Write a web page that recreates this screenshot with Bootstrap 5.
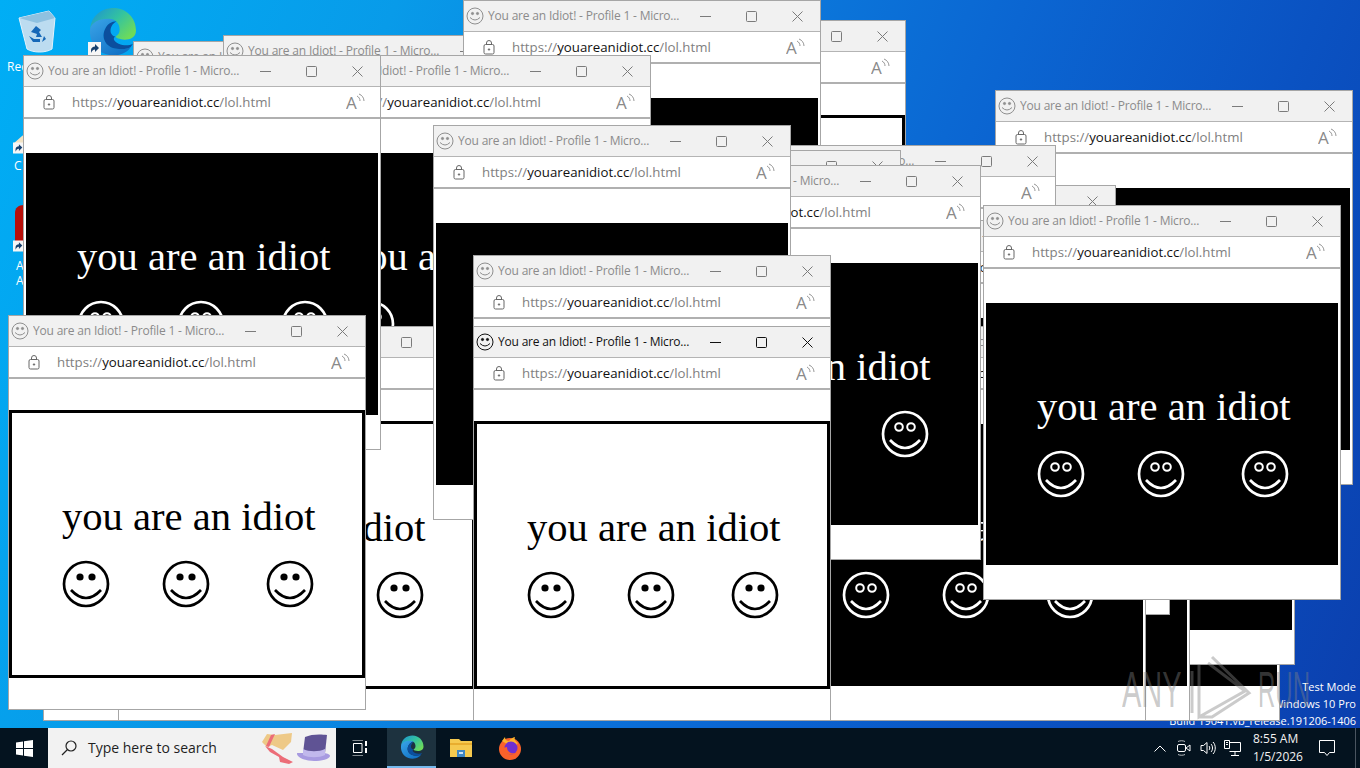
<!DOCTYPE html>
<html lang="en">
<head>
  <meta charset="UTF-8">
  <title>You are an Idiot!</title>
  <link href="https://cdn.jsdelivr.net/npm/bootstrap@5.3.3/dist/css/bootstrap.min.css" rel="stylesheet">
  <script src="https://cdn.jsdelivr.net/npm/bootstrap@5.3.3/dist/js/bootstrap.bundle.min.js"></script>
  <style>
    html, body { height: 768px; overflow: hidden; }
    body {
      font-family: "Open Sans", "Noto Sans", sans-serif;
      width: 1360px;
      margin: 0;
    }
    .desk {
      height: 728px;
      position: relative;
      overflow: hidden;
      background: linear-gradient(112deg, #00aef5 0%, #089be9 24%, #0b7fdf 42%, #0b66d2 62%, #0a52c2 80%, #0b3fae 100%);
    }
    .desk-item { position: absolute; }
    .desk-label { position: absolute; color: #fff; font-size: 12px; line-height: 15px; }
    .test-note {
      position: absolute;
      right: 4px;
      top: 678px;
      text-align: right;
      color: #fff;
      font-size: 11px;
      line-height: 17px;
    }

    .browser-win {
      position: absolute;
      width: 358px;
      height: 395px;
      background: #fff;
      border: 1px solid #a6a6a6;
      display: flex;
      flex-direction: column;
    }
    .win-title {
      height: 31px;
      flex: none;
      background: #f1f1f1;
      border-bottom: 1px solid #b4b4b4;
      display: flex;
      align-items: center;
      color: #8b8b8b;
      font-size: 12px;
      padding-left: 2px;
    }
    .win-title .title-icon { width: 18px; height: 18px; flex: none; margin-right: 4px; color: #8f8f8f; }
    .win-title .title-text { flex: 1; white-space: nowrap; overflow: hidden; letter-spacing: -.19px; }
    .win-btn { width: 46px; height: 30px; flex: none; display: flex; align-items: center; justify-content: center; color: #7b7b7b; }
    .win-addr {
      height: 32px;
      flex: none;
      border-bottom: 2px solid #b0b0b0;
      display: flex;
      align-items: center;
      color: #808080;
      font-size: 13.25px;
      padding-left: 18px;
      white-space: nowrap;
    }
    .win-addr .lock { width: 14px; height: 16px; flex: none; margin-right: 16px; color: #666; }
    .win-addr .url-text { padding-top: 2px; }
    .win-addr b { font-weight: 400; color: #111; }
    .win-addr .read-aloud { width: 20px; height: 18px; flex: none; margin-left: auto; margin-right: 14px; color: #8a8a8a; }
    .active-win .win-title { color: #111; }
    .active-win .win-title .title-icon, .active-win .win-btn { color: #111; }

    .idiot-box {
      margin-top: 31px;
      height: 268px;
      flex: none;
      border: 3px solid #000;
      background: #fff;
      color: #000;
    }
    .idiot-box.dark-box { border-color: #fff; border-width: 3px 2px; background: #000; color: #fff; }
    .idiot-line {
      font-family: "Liberation Serif", serif;
      font-size: 40.6px;
      line-height: 46px;
      white-space: nowrap;
      padding: 81px 0 0 50px;
    }
    .face-row { display: flex; padding: 20px 0 0 50px; }
    .dark-box .idiot-line, .dark-box .face-row { padding-left: 51px; }
    .face-row svg { width: 48px; height: 48px; flex: none; }
    .face-row svg:nth-child(2) { margin: 0 56px 0 52px; }

    .water-mark {
      position: absolute;
      left: 1117px;
      top: 655px;
      width: 200px;
      height: 65px;
      pointer-events: none;
    }
    .water-mark span {
      position: absolute;
      top: 0;
      font-family: "Liberation Sans", sans-serif;
      font-size: 50px;
      line-height: 70px;
      color: rgba(130, 130, 130, .42);
      transform-origin: left top;
    }
    .water-any { left: 5px; transform: scaleX(.58); }
    .water-run { left: 141px; transform: scaleX(.48); }

    .task-bar {
      height: 40px;
      background: #04131f;
      display: flex;
      align-items: stretch;
      color: #fff;
    }
    .task-btn { width: 48px; flex: none; display: flex; align-items: center; justify-content: center; }
    .task-app { width: 49px; }
    .task-btn.on { background: #1d323f; border-bottom: 2px solid #76b9ed; margin-left: 3px; }
    .search-box {
      width: 288px;
      flex: none;
      background: #f2f2f2;
      color: #1f1f1f;
      font-size: 14px;
      display: flex;
      align-items: center;
      padding-left: 13px;
      padding-bottom: 1px;
      position: relative;
    }
    .search-box svg.glass { margin-right: 11px; }
    .search-box svg.hats { position: absolute; left: 213px; top: 1px; }
    .tray { margin-left: auto; display: flex; align-items: center; }
    .tray-icon { display: flex; justify-content: center; width: 24px; }
    .clock { font-size: 12px; line-height: 18px; width: 59px; padding-left: 9px; white-space: nowrap; color: #f2f2f2; }
    .notify { width: 48px; display: flex; justify-content: center; margin-right: 4px; }
    .show-desk { width: 5px; height: 100%; border-left: 1px solid #4a5560; }
  </style>
</head>
<body>

  <svg width="0" height="0" class="position-absolute">
    <defs>
      <linearGradient id="edgeTop" x1="0" y1="0" x2="1" y2=".7">
        <stop offset="0" stop-color="#1b8fd6"/><stop offset=".55" stop-color="#33c3a0"/><stop offset="1" stop-color="#6edb5a"/>
      </linearGradient>
      <linearGradient id="edgeLow" x1="0" y1="0" x2=".8" y2="1">
        <stop offset="0" stop-color="#3aa5e8"/><stop offset="1" stop-color="#0f6fc4"/>
      </linearGradient>
      <symbol id="edgeLogo" viewBox="0 0 48 48">
        <path d="M2 22C3 9 13 1 25 1c13 0 22 10 22 22 0 7-6 9-11 9-5 0-9-2-9-3 3-2 4-4 4-7 0-7-6-11-12-10C10 14 3 18 2 22z" fill="url(#edgeTop)"/>
        <path d="M2 22C1 33 7 43 17 46c6 2 14 2 20-2 2-1 4-3 5-5-2 2-8 3-14 2C18 40 12 30 17 21c2-4 6-7 10-8C18 9 3 13 2 22z" fill="url(#edgeLow)"/>
        <path d="M17 21c-5 9 1 19 11 20 6 1 12 0 14-2l2-3c-4 2-9 2-14 0-5-2-6-6-3-7-5-1-6-6-4-10 1-2 3-4 5-5-5 0-9 3-11 7z" fill="#0b4f9e"/>
      </symbol>
      <symbol id="shortcutBox" viewBox="0 0 13 13">
        <rect width="13" height="13" fill="#f6f6f6"/>
        <path d="M3 11V8c0-2 2-3.500 4-3.500V2l4 4-4 4V7.500C5 7.500 4 9 3 11z" fill="#17406f"/>
      </symbol>
    </defs>
  </svg>

  <div class="desk" id="desk">
    <svg class="desk-item" style="left:17px;top:8px" width="40" height="46" viewBox="0 0 40 46">
      <path d="M2 10 32 3l6 7-3 31c-6 4-19 4-25 0z" fill="#bcdcf0" stroke="#e4f2fb"/>
      <path d="M2 10 32 3l6 7-18 5z" fill="#8fc1e0"/>
      <path d="M14 24l5-6 5 4-2 2 3 5h-6l1-3zM12 28l4 6h7v-3h-6zM27 28l-2 6 4-3z" fill="#1668b8"/>
    </svg>
    <div class="desk-label" style="left:7px;top:59px">Rec</div>
    <svg class="desk-item" style="left:88px;top:7px" width="49" height="49"><use href="#edgeLogo"/></svg>
    <svg class="desk-item" style="left:88px;top:42px" width="13" height="13"><use href="#shortcutBox"/></svg>

    <svg class="desk-item" style="left:13px;top:134px" width="12" height="10"><path d="M0 10 9 2l3-2v10z" fill="#f2e3c4"/></svg>
    <svg class="desk-item" style="left:13px;top:142px" width="11" height="12"><use href="#shortcutBox"/></svg>
    <div class="desk-label" style="left:14px;top:158px">C</div>
    <svg class="desk-item" style="left:14px;top:205px" width="10" height="36"><path d="M10 0C4 0 1 3 1 8v28h9z" fill="#b70f0a"/></svg>
    <svg class="desk-item" style="left:13px;top:240px" width="11" height="12"><use href="#shortcutBox"/></svg>
    <div class="desk-label" style="left:16px;top:258px">A<br>A</div>

    <div class="test-note">Test Mode<br>Windows 10 Pro<br>Build 19041.vb_release.191206-1406</div>

    <div class="water-mark" id="waterMark">
      <span class="water-any">ANY</span>
      <span class="water-run">RUN</span>
      <svg class="position-absolute" style="left:73px;top:0" width="62" height="66" viewBox="0 0 62 66" fill="none" stroke="rgba(130,130,130,.42)" stroke-width="3">
        <path d="M2 16V58M9 10V62L55 36 18 8M9 62H22L59 38 22 2"/>
      </svg>
    </div>
  </div>

  <div class="task-bar">
    <div class="task-btn">
      <svg width="17" height="17" viewBox="0 0 17 17" fill="#fff"><path d="M0 2.500 7 1.500V8H0zM8 1.300 17 0V8H8zM0 9H7V15.500L0 14.500zM8 9H17V17L8 15.700z"/></svg>
    </div>
    <div class="search-box">
      <svg class="glass" width="16" height="16" viewBox="0 0 16 16" fill="none" stroke="#222" stroke-width="1.200"><circle cx="10" cy="6" r="5"/><path d="M6.500 9.500 1 15"/></svg>
      Type here to search
      <svg class="hats" width="72" height="38" viewBox="0 0 72 38">
        <path d="M1 13 6 5 14 6 31 4 30 13 22 21 11 16 6 18z" fill="#eec987"/>
        <path d="M10 6 14 5 8 18 5 17zM4 17l7 3 11 8 10 5-4 2-9-2-1-5-9-5z" fill="#ec6d78"/>
        <path d="M36 24c-1 5 10 8 17 8s16-2 16-5c0-2-4-3-7-3z" fill="#a79ae0"/>
        <path d="M44 8c6-3 16-3 22-2l-2 18c-6 3-16 3-22 0z" fill="#5f5394"/>
        <path d="M42 20c6 3 16 3 22 0v6c-6 3-16 3-22 0z" fill="#c1b8ec"/>
      </svg>
    </div>
    <div class="task-btn">
      <svg width="16" height="16" viewBox="0 0 16 16" fill="none" stroke="#fff"><path d="M.5 0H11M.5 16H11M1.500 3.500H10V12.500H1.500z"/><path d="M14 1V6M14 8V13" stroke-width="2"/></svg>
    </div>
    <div class="task-btn task-app on"><svg width="24" height="24"><use href="#edgeLogo"/></svg></div>
    <div class="task-btn task-app">
      <svg width="24" height="20" viewBox="0 0 24 20"><path d="M1 1H10L12 3H23V19H1z" fill="#f5c94f"/><path d="M1 5H23V7H1z" fill="#e8ad2f"/><path d="M8 12H16V19H8z" fill="#3f86c4"/><path d="M10 14H14V16H10z" fill="#cfe3f3"/></svg>
    </div>
    <div class="task-btn task-app">
      <svg width="24" height="24" viewBox="0 0 24 24">
        <circle cx="12" cy="13" r="11" fill="#f9622a"/>
        <path d="M4 5 7 1c0 3 2 4 4 4 2-3 5-4 6-4-1 2 0 4 3 6l-5 5z" fill="#fdb22c"/>
        <circle cx="13" cy="12" r="6.500" fill="#6f2fd0"/>
        <path d="M5 12c1 6 8 8 13 5-5 1-9-1-9-6z" fill="#f9622a"/>
      </svg>
    </div>
    <div class="tray">
      <div class="tray-icon">
        <svg width="12" height="7" viewBox="0 0 12 7" fill="none" stroke="#fff"><path d="M.5 6.500 6 1l5.500 5.500"/></svg>
      </div>
      <div class="tray-icon">
        <svg width="16" height="16" viewBox="0 0 16 16" fill="none" stroke="#fff"><rect x="1.500" y="4.500" width="8" height="7" rx="1.500"/><path d="M10 8l4-3v6z"/><path d="M2 1.500C4 .5 7 .5 9 1.500M2 14.500c2 1 5 1 7 0" stroke-width=".7"/></svg>
      </div>
      <div class="tray-icon">
        <svg width="16" height="16" viewBox="0 0 16 16" fill="none" stroke="#fff"><path d="M1 5.500H3.500L7 2.500V13.500L3.500 10.500H1z"/><path d="M9 6c1 1 1 3 0 4M11 4c2 2 2 6 0 8M13 2c3 3 3 9 0 12"/></svg>
      </div>
      <div class="tray-icon">
        <svg width="17" height="16" viewBox="0 0 17 16" fill="none" stroke="#fff"><path d="M5.500 2.500H16.500V11.500H5.500M11 11.500V15M7 15.500H15M.5 .5H5.500V8.500H.5z"/><path d="M2 2.500H4M2 4.500H4"/></svg>
      </div>
      <div class="clock">8:55 AM<br>1/5/2026</div>
      <div class="notify">
        <svg width="16" height="17" viewBox="0 0 16 17" fill="none" stroke="#fff"><path d="M.5 .5H15.500V12.500H10.500L8 15.500 5.500 12.500H.5z"/></svg>
      </div>
      <div class="show-desk"></div>
    </div>
  </div>

  <script>
    // x, y, box colour; listed bottom window first
    const windows = [
      [133, 41, 'white'], [223, 35, 'white'], [43, 326, 'white'], [548, 20, 'white'],
      [463, 0, 'black'], [293, 55, 'black'], [118, 326, 'white'], [23, 55, 'black'],
      [8, 315, 'white'], [995, 90, 'black'], [758, 185, 'black'],
      [698, 145, 'black'], [543, 150, 'black'], [922, 326, 'black'], [937, 270, 'black'], [832, 326, 'black'],
      [812, 220, 'black'], [788, 326, 'black'], [623, 165, 'black'], [433, 125, 'black'],
      [473, 255, 'white'], [473, 326, 'white', true], [983, 205, 'black']
    ];

    function faceSvg(dark) {
      const eyes = dark
        ? '<circle cx="18" cy="17" r="3.800" fill="none" stroke="currentColor" stroke-width="2"/><circle cx="30" cy="17" r="3.800" fill="none" stroke="currentColor" stroke-width="2"/>'
        : '<circle cx="18" cy="17" r="3.600" fill="currentColor" stroke="none"/><circle cx="30" cy="17" r="3.600" fill="currentColor" stroke="none"/>';
      return `<svg viewBox="0 0 48 48" fill="none" stroke="currentColor" stroke-width="2.700">
        <circle cx="24" cy="24" r="22"/>${eyes}<path d="M9 30Q24 46 39 30"/></svg>`;
    }

    function browserWin([x, y, colour, active]) {
      const dark = colour === 'black';
      return `<div class="browser-win${active ? ' active-win' : ''}" style="left:${x}px;top:${y}px">
        <div class="win-title">
          <svg class="title-icon" viewBox="0 0 18 18" fill="none" stroke="currentColor">
            <circle cx="9" cy="9" r="8"/><circle cx="6.500" cy="6.500" r="1.100" fill="currentColor"/><circle cx="11.500" cy="6.500" r="1.100" fill="currentColor"/>
            <path d="M4 10.500Q9 15.500 14 10.500"/>
          </svg>
          <span class="title-text">You are an Idiot! - Profile 1 - Micro...</span>
          <div class="win-btn"><svg width="11" height="11" fill="none" stroke="currentColor"><path d="M0 5.500H11"/></svg></div>
          <div class="win-btn"><svg width="11" height="11" fill="none" stroke="currentColor"><rect x=".5" y=".5" width="10" height="10" rx="1"/></svg></div>
          <div class="win-btn"><svg width="11" height="11" fill="none" stroke="currentColor"><path d="M.5 .5 10.500 10.500M10.500 .5 .5 10.500"/></svg></div>
        </div>
        <div class="win-addr">
          <svg class="lock" viewBox="0 0 14 16" fill="none" stroke="currentColor">
            <rect x="2" y="5.500" width="10" height="9.500" rx="1.500"/><path d="M4.500 5.500V4a2.500 2.500 0 0 1 5 0V5.500"/><circle cx="7" cy="10.500" r=".7" fill="currentColor"/>
          </svg>
          <span class="url-text">https://<b>youareanidiot.cc</b>/lol.html</span>
          <svg class="read-aloud" viewBox="0 0 20 18" fill="none" stroke="currentColor" stroke-width=".9">
            <text x="0" y="16" font-size="17" font-family="Open Sans" fill="currentColor" stroke="none">A</text>
            <path d="M11 3c2 1 3 3 3 5M13 1c3 1 5 4 5 7"/>
          </svg>
        </div>
        <div class="idiot-box${dark ? ' dark-box' : ''}">
          <div class="idiot-line">you are an idiot</div>
          <div class="face-row">${faceSvg(dark).repeat(3)}</div>
        </div>
      </div>`;
    }

    document.getElementById('waterMark').insertAdjacentHTML('beforebegin', windows.map(browserWin).join(''));
  </script>

</body>
</html>
